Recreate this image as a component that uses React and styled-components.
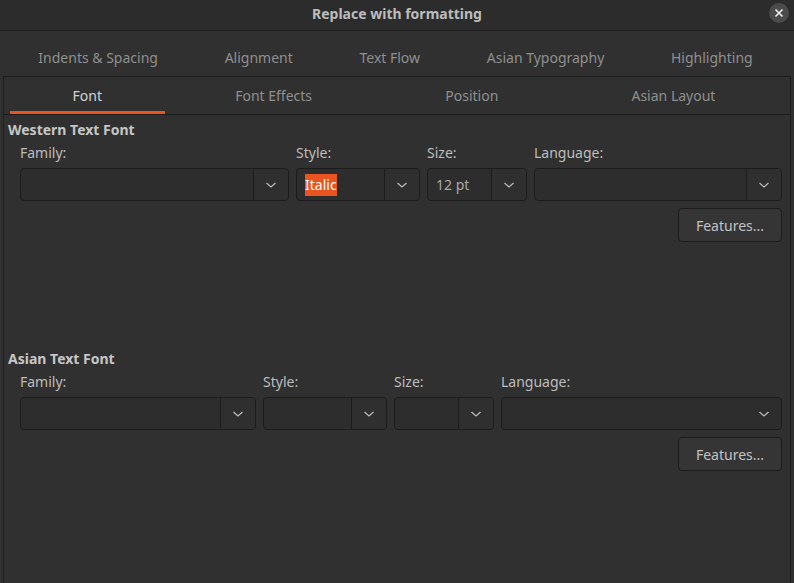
import React from "react";
import styled, { createGlobalStyle } from "styled-components";

const GlobalStyle = createGlobalStyle`
  html, body {
    margin: 0;
    padding: 0;
    background: #303030;
  }
  body {
    font-family: "Noto Sans", "DejaVu Sans", sans-serif;
    font-size: 14px;
  }
`;

const outerTabs = ["Indents & Spacing", "Alignment", "Text Flow", "Asian Typography", "Highlighting"];
const innerTabs = ["Font", "Font Effects", "Position", "Asian Layout"];

const Chevron = () => (
  <svg width="12" height="8" viewBox="0 0 12 8">
    <path d="M1.5 2 L6 6 L10.5 2" fill="none" stroke="#bdbdbd" strokeWidth="1.2" />
  </svg>
);

const Combo = ({ width, value, selected, divider = true }) => (
  <ComboBox style={{ width }}>
    <ComboEntry>
      {value && <ComboValue $selected={selected}>{value}</ComboValue>}
    </ComboEntry>
    <ComboButton $divider={divider}>
      <Chevron />
    </ComboButton>
  </ComboBox>
);

const FontSection = ({ title, cols, style, size, languageDivider }) => (
  <Section>
    <SectionTitle>{title}</SectionTitle>
    <FieldRow>
      <Field>
        <Label>Family:</Label>
        <Combo width={cols[0]} />
      </Field>
      <Field>
        <Label>Style:</Label>
        <Combo width={cols[1]} value={style} selected />
      </Field>
      <Field>
        <Label>Size:</Label>
        <Combo width={cols[2]} value={size} />
      </Field>
      <Field>
        <Label>Language:</Label>
        <Combo width={cols[3]} divider={languageDivider} />
      </Field>
    </FieldRow>
    <ButtonRow>
      <FeaturesButton>Features...</FeaturesButton>
    </ButtonRow>
  </Section>
);

const App = () => {
  return (
    <>
      <GlobalStyle />
      <Window>
        <TitleBar>
          <Title>Replace with formatting</Title>
          <CloseButton>
            <svg width="10" height="10" viewBox="0 0 10 10">
              <path d="M1.5 1.5 L8.5 8.5 M8.5 1.5 L1.5 8.5" stroke="#f2f2f2" strokeWidth="1.6" />
            </svg>
          </CloseButton>
        </TitleBar>
        <OuterTabBar>
          {outerTabs.map((t) => (
            <OuterTab key={t}>{t}</OuterTab>
          ))}
        </OuterTabBar>
        <Notebook>
          <InnerTabBar>
            {innerTabs.map((t, i) => (
              <InnerTab key={t} $active={i === 0}>
                {t}
              </InnerTab>
            ))}
          </InnerTabBar>
          <Page>
            <FontSection
              title="Western Text Font"
              cols={[269, 124, 100, 248]}
              style="Italic"
              size="12 pt"
              languageDivider
            />
            <Spacer />
            <FontSection
              title="Asian Text Font"
              cols={[236, 124, 100, 281]}
              languageDivider={false}
            />
          </Page>
        </Notebook>
      </Window>
    </>
  );
};

const Window = styled.div`
  width: 794px;
  height: 583px;
  display: flex;
  flex-direction: column;
  background: #303030;
  overflow: hidden;
`;

const TitleBar = styled.div`
  height: 31px;
  box-sizing: border-box;
  padding-bottom: 4px;
  flex: none;
  display: flex;
  align-items: center;
  justify-content: center;
  position: relative;
  background: #2c2c2c;
  border-bottom: 1px solid #202020;
`;

const Title = styled.div`
  font-family: "Noto Sans", sans-serif;
  font-weight: bold;
  font-size: 14px;
  color: #bcbcbc;
`;

const CloseButton = styled.div`
  position: absolute;
  right: 5px;
  top: 3px;
  width: 20px;
  height: 20px;
  border-radius: 50%;
  background: #4b4b4b;
  display: flex;
  align-items: center;
  justify-content: center;
`;

const OuterTabBar = styled.div`
  height: 45px;
  flex: none;
  display: flex;
  padding: 0 8px 0 5px;
`;

const OuterTab = styled.div`
  flex: 1 1 auto;
  display: flex;
  align-items: center;
  justify-content: center;
  padding: 8px 10px 0;
  color: #8f8f8f;
  font-size: 14px;
  white-space: nowrap;
`;

const Notebook = styled.div`
  flex: 1;
  margin: 0 3px;
  border: 1px solid #1d1d1d;
  border-bottom: none;
  display: flex;
  flex-direction: column;
`;

const InnerTabBar = styled.div`
  height: 37px;
  flex: none;
  display: flex;
  gap: 8px;
  padding: 0 12px 0 6px;
  border-bottom: 1px solid #1d1d1d;
`;

const InnerTab = styled.div`
  flex: 1 1 auto;
  display: flex;
  align-items: center;
  justify-content: center;
  padding: 0 10px;
  color: ${(p) => (p.$active ? "#d2d2d2" : "#8f8f8f")};
  font-size: 14px;
  white-space: nowrap;
  box-shadow: ${(p) => (p.$active ? "inset 0 -3px 0 #e95420" : "none")};
`;

const Page = styled.div`
  flex: 1;
  display: flex;
  flex-direction: column;
  padding: 6px 8px 0 4px;
`;

const Section = styled.div`
  display: flex;
  flex-direction: column;
`;

const SectionTitle = styled.div`
  height: 18px;
  line-height: 18px;
  font-weight: bold;
  font-size: 14px;
  color: #c6c6c6;
`;

const FieldRow = styled.div`
  display: flex;
  gap: 7px;
  margin-top: 5px;
  padding-left: 12px;
`;

const Field = styled.div`
  display: flex;
  flex-direction: column;
  gap: 6px;
`;

const Label = styled.div`
  height: 18px;
  line-height: 18px;
  font-size: 14px;
  color: #bdbdbd;
`;

const ComboBox = styled.div`
  height: 33px;
  box-sizing: border-box;
  display: flex;
  border: 1px solid #1c1c1c;
  border-radius: 4px;
  background: #2d2d2d;
  overflow: hidden;
`;

const ComboEntry = styled.div`
  flex: 1;
  display: flex;
  align-items: center;
  padding-left: 8px;
`;

const ComboValue = styled.span`
  font-size: 14px;
  line-height: 22px;
  color: ${(p) => (p.$selected ? "#ffffff" : "#a9a9a9")};
  background: ${(p) => (p.$selected ? "#e95420" : "transparent")};
`;

const ComboButton = styled.div`
  width: 34px;
  flex: none;
  display: flex;
  align-items: center;
  justify-content: center;
  border-left: ${(p) => (p.$divider ? "1px solid #1c1c1c" : "none")};
  background: ${(p) => (p.$divider ? "#2f2f2f" : "transparent")};
`;

const ButtonRow = styled.div`
  display: flex;
  justify-content: flex-end;
  margin-top: 7px;
`;

const FeaturesButton = styled.button`
  width: 104px;
  height: 34px;
  box-sizing: border-box;
  border: 1px solid #1c1c1c;
  border-radius: 4px;
  background: #353535;
  color: #c2c2c2;
  font-family: "Noto Sans", sans-serif;
  font-size: 14px;
  padding: 0;
`;

const Spacer = styled.div`
  height: 108px;
  flex: none;
`;

export default App;
